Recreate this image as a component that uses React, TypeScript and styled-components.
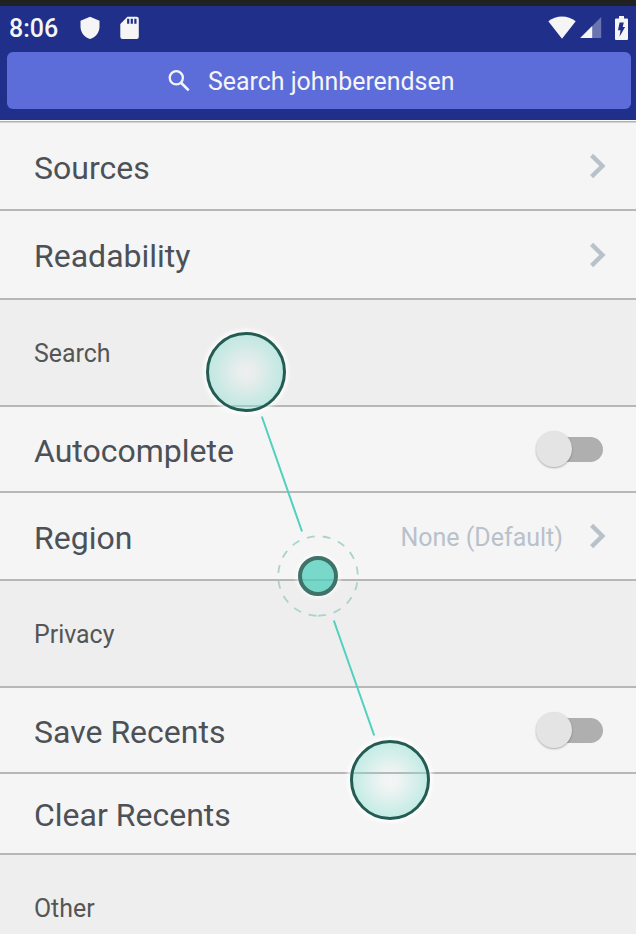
import React from "react";
import styled, { createGlobalStyle } from "styled-components";

const GlobalStyle = createGlobalStyle`
  * { box-sizing: border-box; }
  html, body { margin: 0; padding: 0; overflow: hidden; background: #f5f5f5; }
  body { font-family: Roboto, "Liberation Sans", sans-serif; }
  svg { display: block; flex: none; }
`;

const Screen = styled.main`
  position: relative;
  width: 636px;
  height: 934px;
  overflow: hidden;
  background: #f5f5f5;
  display: flex;
  flex-direction: column;
`;

const Header = styled.header`
  flex: none;
  height: 120px;
  border-top: 6px solid #212121;
  background: #1f2f8a;
`;

const StatusBar = styled.div`
  height: 46px;
  padding: 0 8px 2px 9px;
  display: flex;
  align-items: center;
  justify-content: space-between;
`;

const StatusGroup = styled.div<{ $gap: number }>`
  display: flex;
  align-items: center;
  gap: ${(p) => p.$gap}px;
`;

const Clock = styled.time`
  width: 51px;
  padding-top: 2px;
  color: #f5f5f5;
  font-size: 25px;
  font-weight: 500;
  line-height: 30px;
  white-space: nowrap;
`;

const SearchBar = styled.button`
  display: flex;
  align-items: center;
  width: 624px;
  height: 57px;
  margin: 0 5px 0 7px;
  padding: 0 0 0 161px;
  gap: 18px;
  border: 0;
  border-radius: 6px;
  background: #5c6dda;
  color: #f5f5f5;
  font-family: inherit;
  font-size: 24.9px;
`;

const SearchText = styled.span`
  padding-top: 2px;
  line-height: 30px;
  white-space: nowrap;
`;

const Divider = styled.div`
  flex: none;
  height: 3px;
  border-top: 1px solid #fafafa;
  border-bottom: 1px solid #d2d2d2;
  background: #b0b0b0;
`;

const Row = styled.div<{ $height: number }>`
  flex: none;
  display: flex;
  align-items: center;
  height: ${(p) => p.$height}px;
  padding: 0 30px 0 34px;
  border-bottom: 2px solid #b7b7b7;
`;

const SectionRow = styled(Row)`
  background: #eeeeee;
`;

const Label = styled.span`
  flex: 1;
  padding-top: 3px;
  color: #4c5157;
  font-size: 32px;
  line-height: 38px;
  white-space: nowrap;
`;

const SectionLabel = styled.h2`
  margin: 0;
  padding-top: 3px;
  color: #555555;
  font-size: 24.9px;
  font-weight: 400;
  line-height: 30px;
`;

const Value = styled.span`
  padding-top: 3px;
  margin-right: 27px;
  color: #b9c1cb;
  font-size: 25px;
  line-height: 30px;
  white-space: nowrap;
`;

const Track = styled.span`
  display: flex;
  align-items: center;
  width: 65px;
  height: 25px;
  margin-right: 3px;
  border-radius: 13px;
  background: #afafaf;
`;

const Thumb = styled.span`
  width: 36px;
  height: 36px;
  margin-left: -2px;
  border-radius: 50%;
  background: #e4e4e4;
  box-shadow: 0 1px 2px rgba(0, 0, 0, 0.3);
`;

const GestureOverlay = styled.svg`
  position: absolute;
  left: 0;
  top: 0;
  pointer-events: none;
`;

const Chevron = () => (
  <svg width="16" height="26" viewBox="0 0 16 26" fill="none" stroke="#b9c1cb" strokeWidth="4.4">
    <path d="M1.6 2.4 12.4 13 1.6 23.6" />
  </svg>
);

const Toggle = () => (
  <Track role="switch" aria-checked={false}>
    <Thumb />
  </Track>
);

const ShieldIcon = () => (
  <svg width="20" height="24" viewBox="0 0 20 24" fill="#f5f5f5">
    <path d="M10 .7.5 4.7v6.1c0 5.6 4 10.8 9.5 12.2 5.5-1.4 9.5-6.6 9.500-12.2V4.7Z" />
  </svg>
);

const SdCardIcon = () => (
  <svg width="19" height="24" viewBox="0 0 19 24">
    <path fill="#f5f5f5" d="M7.4.7H16.6A2.200 2.200 0 0 1 18.800 2.900V20.800A2.200 2.200 0 0 1 16.600 23H2.500A2.200 2.200 0 0 1 .300 20.800V7.900Z" />
    <path stroke="#1f2f8a" strokeWidth="2.2" d="M8.2 2.700v5M11.800 2.700v5M15.400 2.700v5" />
  </svg>
);

const WifiIcon = () => (
  <svg width="28" height="24" viewBox="0 0 28 24" fill="#f5f5f5">
    <path d="M14 22.700 .3 5.200C4.200 2 9 .400 14 .400s9.800 1.600 13.700 4.800Z" />
  </svg>
);

const SignalIcon = () => (
  <svg width="22" height="22" viewBox="0 0 22 22">
    <path fill="#6a74b0" d="M21.200 0v21H.200Z" />
    <path fill="#f5f5f5" d="M12.200 9v12H.200Z" />
  </svg>
);

const BatteryIcon = () => (
  <svg width="13" height="24" viewBox="0 0 13 24">
    <path fill="#f5f5f5" d="M4 0h5v2.500h3a1 1 0 0 1 1 1V23a1 1 0 0 1-1 1H1a1 1 0 0 1-1-1V3.500a1 1 0 0 1 1-1h3Z" />
    <path fill="#1f2f8a" d="M4.600 6.500h4.200L7.700 11h2.400L4.500 20.800l1-6.600H3Z" />
  </svg>
);

const SearchIcon = () => (
  <svg width="22" height="22" viewBox="0 0 22 22" fill="none" stroke="#f5f5f5">
    <circle cx="8.300" cy="7.800" r="6.600" strokeWidth="2.300" />
    <path d="m12.800 12.500 7.900 7.900" strokeWidth="2.600" />
  </svg>
);

const TouchPoint = ({ cx, cy }: { cx: number; cy: number }) => (
  <g>
    <circle cx={cx} cy={cy} r="40" fill="none" stroke="#ffffff" strokeWidth="5" strokeOpacity="0.9" filter="url(#glow)" mask={`url(#outside-${cx})`} />
    <mask id={`outside-${cx}`} maskUnits="userSpaceOnUse" x={cx - 60} y={cy - 60} width="120" height="120">
      <rect x={cx - 60} y={cy - 60} width="120" height="120" fill="white" />
      <circle cx={cx} cy={cy} r="39" fill="black" />
    </mask>
    <circle cx={cx} cy={cy} r="38.500" fill="url(#touch)" stroke="#245c54" strokeWidth="3" />
  </g>
);

const Gesture = () => (
  <GestureOverlay width="636" height="934" viewBox="0 0 636 934">
    <defs>
      <radialGradient id="touch">
        <stop offset="0" stopColor="#86e0d2" stopOpacity="0" />
        <stop offset="0.200" stopColor="#86e0d2" stopOpacity="0.040" />
        <stop offset="1" stopColor="#86e0d2" stopOpacity="0.460" />
      </radialGradient>
      <filter id="glow" x="-30%" y="-30%" width="160%" height="160%">
        <feGaussianBlur stdDeviation="2.200" />
      </filter>
      <mask id="outside-center" maskUnits="userSpaceOnUse" x="278" y="536" width="80" height="80">
        <rect x="278" y="536" width="80" height="80" fill="white" />
        <circle cx="318" cy="576" r="19" fill="black" />
      </mask>
    </defs>
    <g stroke="#4fd1be" strokeWidth="2">
      <path d="M261.800 416.500 302 531.500" />
      <path d="M333.800 620.500 374.200 735.500" />
    </g>
    <path
      d="M318 615.800A39.800 39.800 0 0 0 318 536.200A39.800 39.800 0 0 0 318 615.800"
      fill="none"
      stroke="#acd3cb"
      strokeWidth="1.800"
      strokeDasharray="8 8"
    />
    <circle cx="318" cy="576" r="20" fill="none" stroke="#ffffff" strokeWidth="3" strokeOpacity="0.9" filter="url(#glow)" mask="url(#outside-center)" />
    <circle cx="318" cy="576" r="18" fill="#48cdb9" fillOpacity="0.720" />
    <circle cx="318" cy="576" r="18" fill="none" stroke="#3f7268" strokeWidth="4" />
    <TouchPoint cx={246} cy={372} />
    <TouchPoint cx={390} cy={780} />
  </GestureOverlay>
);

export default function App() {
  return (
    <Screen>
      <GlobalStyle />
      <Header>
        <StatusBar>
          <StatusGroup $gap={20}>
            <Clock>8:06</Clock>
            <ShieldIcon />
            <SdCardIcon />
          </StatusGroup>
          <StatusGroup $gap={13}>
            <StatusGroup $gap={4}>
              <WifiIcon />
              <SignalIcon />
            </StatusGroup>
            <BatteryIcon />
          </StatusGroup>
        </StatusBar>
        <SearchBar>
          <SearchIcon />
          <SearchText>Search johnberendsen</SearchText>
        </SearchBar>
      </Header>
      <Divider />
      <Row $height={88}>
        <Label>Sources</Label>
        <Chevron />
      </Row>
      <Row $height={89}>
        <Label>Readability</Label>
        <Chevron />
      </Row>
      <SectionRow $height={107}>
        <SectionLabel>Search</SectionLabel>
      </SectionRow>
      <Row $height={86}>
        <Label>Autocomplete</Label>
        <Toggle />
      </Row>
      <Row $height={88}>
        <Label>Region</Label>
        <Value>None (Default)</Value>
        <Chevron />
      </Row>
      <SectionRow $height={107}>
        <SectionLabel>Privacy</SectionLabel>
      </SectionRow>
      <Row $height={86}>
        <Label>Save Recents</Label>
        <Toggle />
      </Row>
      <Row $height={81}>
        <Label>Clear Recents</Label>
      </Row>
      <SectionRow $height={107}>
        <SectionLabel>Other</SectionLabel>
      </SectionRow>
      <Gesture />
    </Screen>
  );
}
